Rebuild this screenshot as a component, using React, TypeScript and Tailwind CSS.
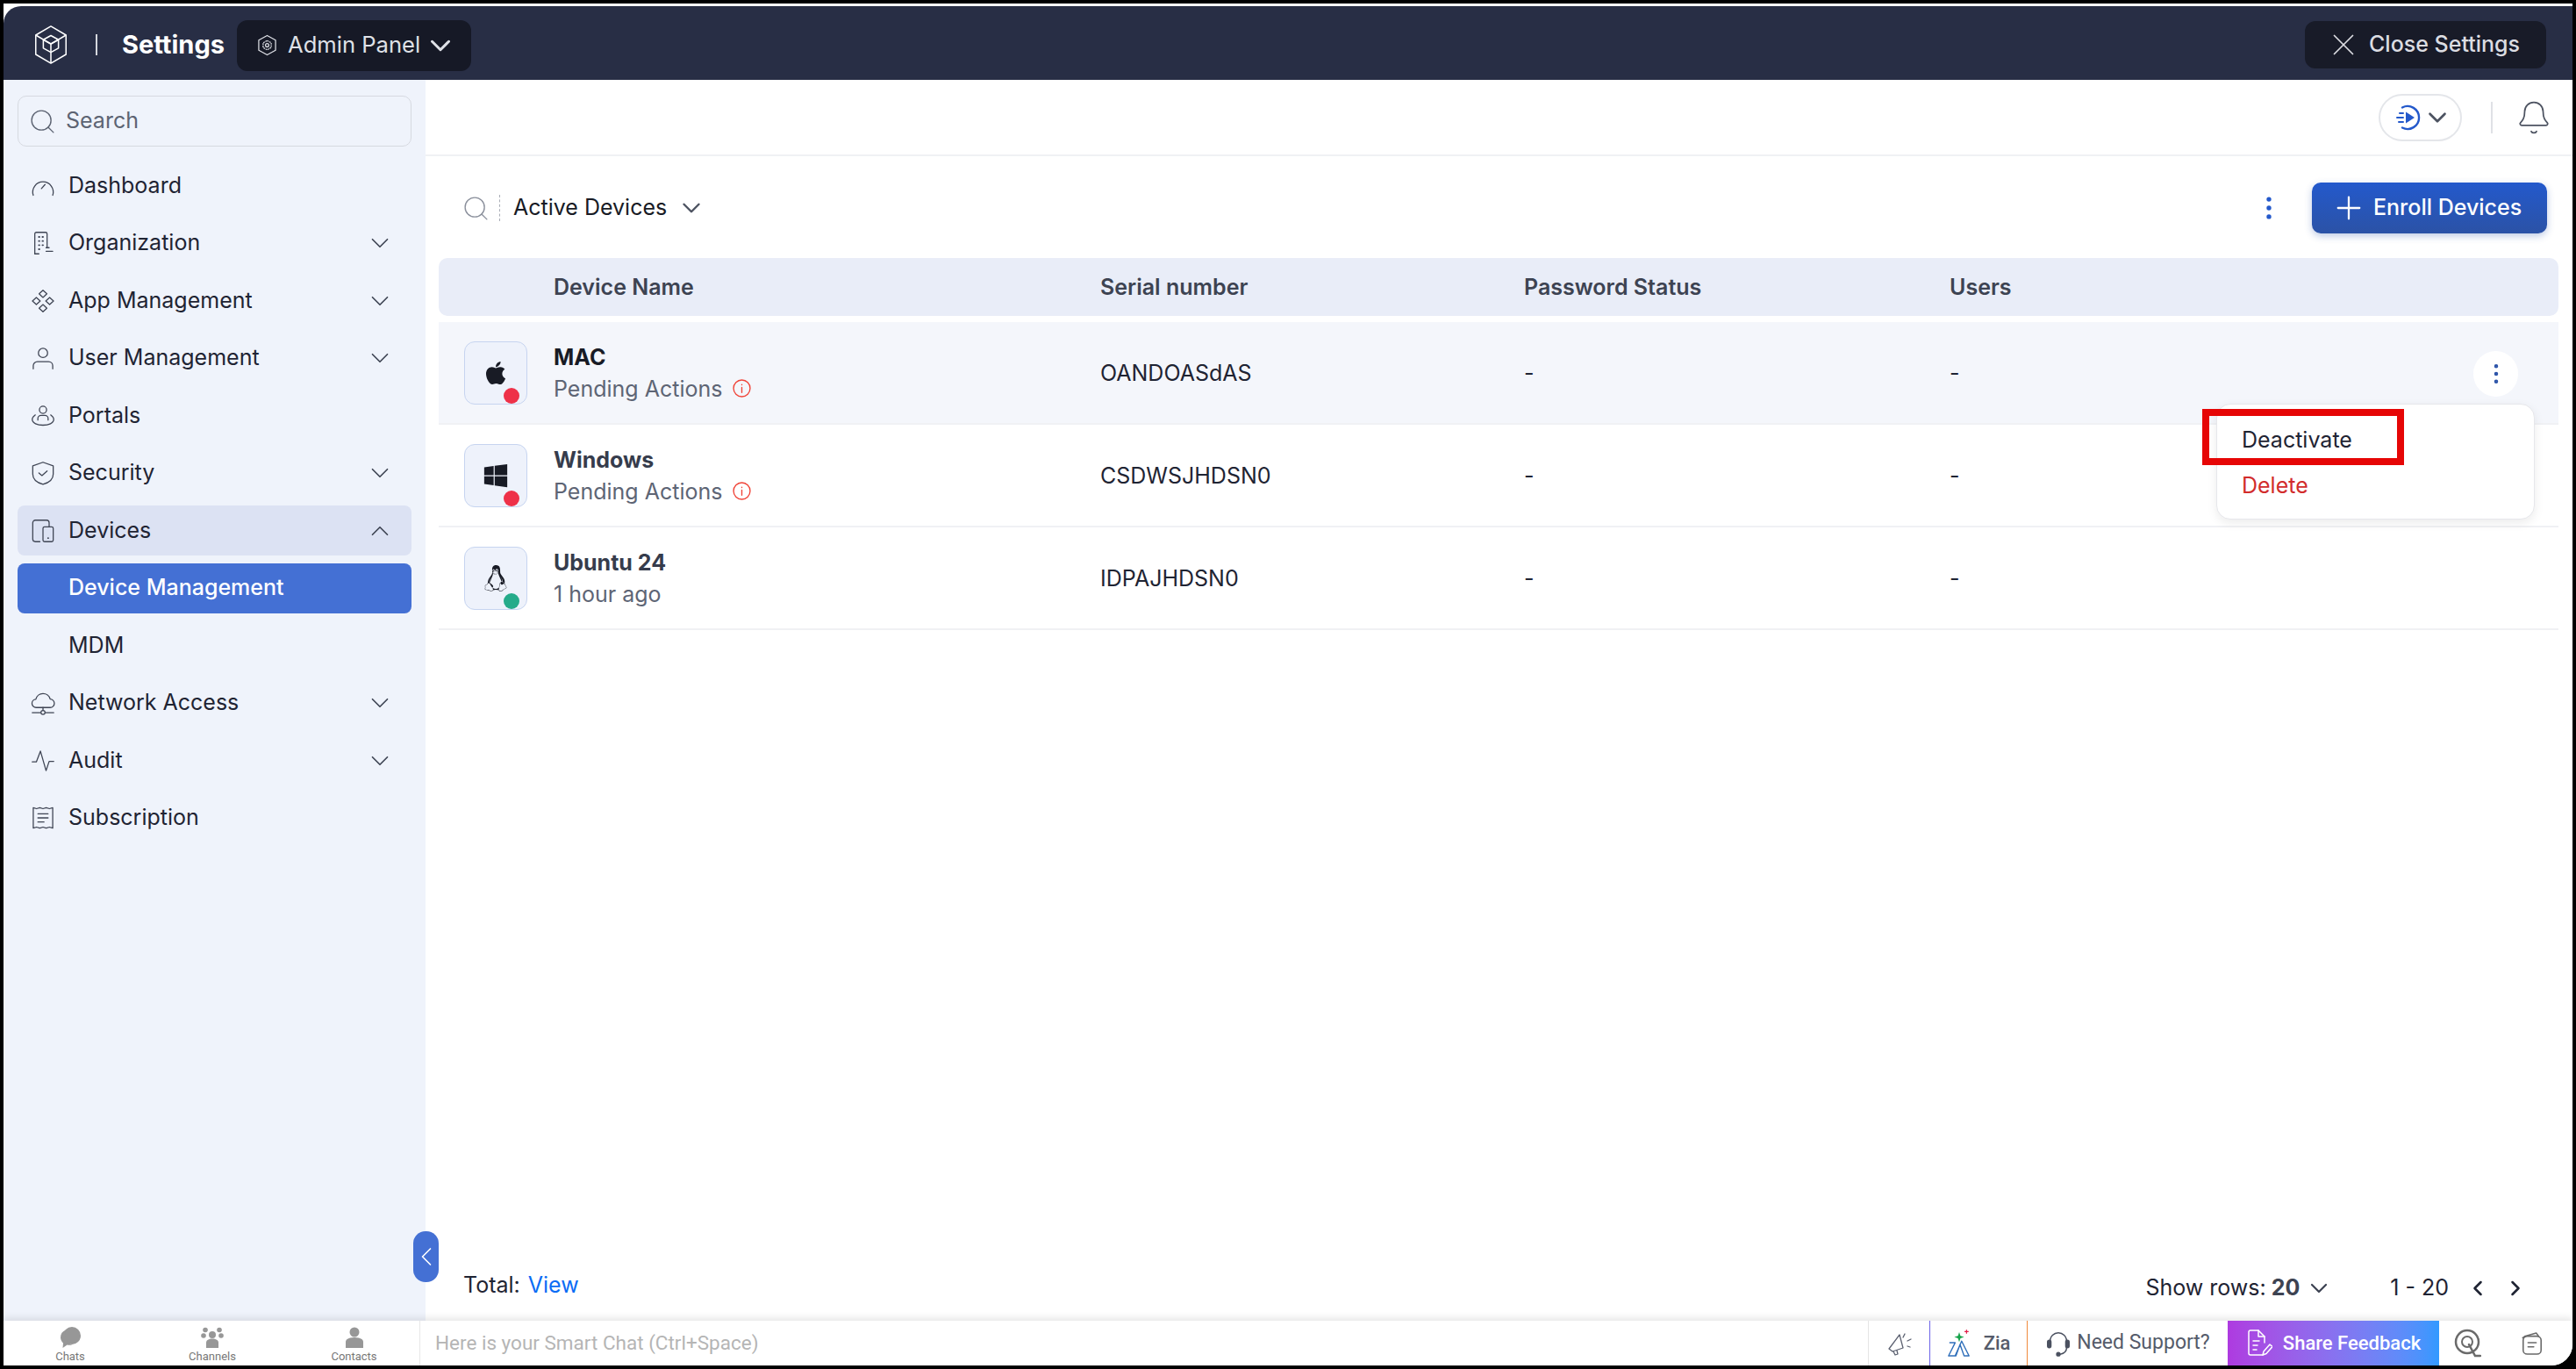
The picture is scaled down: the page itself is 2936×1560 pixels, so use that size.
import { useState } from "react";
import { ChevronDown, ChevronUp, ChevronLeft, ChevronRight, Plus, X, Search, Bell, EllipsisVertical } from "lucide-react";
import { FaApple, FaWindows, FaLinux } from "react-icons/fa";

type IconProps = { className?: string };

function Svg({ className, children }: IconProps & { children: React.ReactNode }) {
  return (
    <svg viewBox="0 0 24 24" fill="none" stroke="currentColor" strokeWidth="1.1" strokeLinecap="round" strokeLinejoin="round" className={className}>
      {children}
    </svg>
  );
}

const GaugeIcon = ({ className }: IconProps) => (
  <Svg className={className}>
    <path d="M2.500 21a10 10 0 1 1 19 0" />
    <path d="M10.500 14.500l3.500-4" />
  </Svg>
);
const BuildingIcon = ({ className }: IconProps) => (
  <Svg className={className}>
    <path d="M4 22.500V3A1.500 1.500 0 0 1 5.500 1.500h9A1.500 1.500 0 0 1 16 3v13" />
    <path d="M4 22.500h4M15 20h6.500M15 16.500h3" />
    <path d="M8 6h.5M11.500 6h.5M8 10h.5M11.500 10h.5M8 14h.5M11.500 14h.5M8 18h.5" strokeWidth="1.600" />
  </Svg>
);
const AppsIcon = ({ className }: IconProps) => (
  <Svg className={className}>
    <path d="M12 1.500l3.800 3.500L12 8.500 8.200 5zM12 15.500l3.800 3.500-3.800 3.500L8.200 19zM5.500 8.500L9.300 12l-3.800 3.500L1.700 12zM18.500 8.500l3.800 3.500-3.800 3.500-3.800-3.500z" />
  </Svg>
);
const UserIcon = ({ className }: IconProps) => (
  <Svg className={className}>
    <circle cx="12" cy="7" r="4.500" />
    <path d="M2.500 22.500v-3a4 4 0 0 1 4-4h11a4 4 0 0 1 4 4v3" />
  </Svg>
);
const PortalIcon = ({ className }: IconProps) => (
  <Svg className={className}>
    <circle cx="12" cy="6" r="3.500" />
    <path d="M7 16v-1.500a3 3 0 0 1 3-3h4a3 3 0 0 1 3 3V16" />
    <path d="M4.500 11C2.500 12.500 1.500 14 1.500 15.500c0 3.500 5 5.500 10.500 5.500s10.500-2 10.500-5.500c0-1.500-1-3-3-4.500" />
  </Svg>
);
const ShieldIcon = ({ className }: IconProps) => (
  <Svg className={className}>
    <path d="M12 1.500l10 3.500v8c0 5-4.500 8.500-10 10C6.500 21.500 2 18 2 13V5z" />
    <path d="M8 12l3 2.500 5-4.500" />
  </Svg>
);
const DevicesIcon = ({ className }: IconProps) => (
  <Svg className={className}>
    <path d="M9 22.500H4.500A2.500 2.500 0 0 1 2 20V4a2.500 2.500 0 0 1 2.500-2.500h11A2.500 2.500 0 0 1 18 4v3.500" />
    <rect x="12" y="8" width="10" height="14.500" rx="1.500" />
    <path d="M17 19h.1" strokeWidth="1.600" />
  </Svg>
);
const CloudIcon = ({ className }: IconProps) => (
  <Svg className={className}>
    <path d="M7 16.500H5.500a4 4 0 0 1-.5-8 7.200 7.200 0 0 1 14-.2 4 4 0 0 1 0 8.200z" />
    <path d="M1.500 21.500h8M14.500 21.500h8M12 16.500v2.500" />
    <circle cx="12" cy="21.300" r="2" />
  </Svg>
);
const PulseIcon = ({ className }: IconProps) => (
  <Svg className={className}>
    <path d="M1.500 13h4L9.500 2.500 15 21.500l3-9h4.500" />
  </Svg>
);
const ReceiptIcon = ({ className }: IconProps) => (
  <Svg className={className}>
    <path d="M2.500 2l3.200 1L8.900 2l3.100 1 3.100-1 3.200 1 3.200-1v20l-3.200-1-3.200 1-3.100-1-3.100 1-3.200-1-3.200 1z" />
    <path d="M7 8h10M7 12h10M7 16h6" />
  </Svg>
);

const CubeLogo = () => (
  <svg viewBox="0 0 40 48" fill="none" stroke="white" strokeWidth="1.600" strokeLinejoin="round" className="w-[40px] h-[46px]">
    <path d="M20 2l18 10.500v23L20 46 2 35.500v-23z" />
    <path d="M2 12.500L20 23l18-10.500M20 23v23" />
    <path d="M20 13l9 5v10l-9 5-9-5V18z" />
    <path d="M11 18l9 5 9-5" />
  </svg>
);
const HexGear = () => (
  <svg viewBox="0 0 24 26" fill="none" stroke="#dfe1e7" strokeWidth="1.300" strokeLinejoin="round" className="w-[23px] h-[25px]">
    <path d="M12 1.500l10 5.500v12l-10 5.500L2 19V7z" />
    <circle cx="12" cy="13" r="2" />
    <path d="M12 7.500l4.800 2.700v5.600L12 18.500l-4.800-2.700v-5.600z" strokeDasharray="2 0.800" />
  </svg>
);
const PlayFast = () => (
  <svg viewBox="0 0 30 30" fill="none" className="w-[30px] h-[30px]">
    <path d="M8 3.500A13 13 0 1 1 8 26.500" stroke="#2459cb" strokeWidth="2.400" strokeLinecap="round" />
    <path d="M12 8.500l10 6.500-10 6.500z" fill="#2459cb" />
    <path d="M5 10h4M2 15h7M4 20h5" stroke="#2459cb" strokeWidth="2" strokeLinecap="round" />
  </svg>
);
const InfoDot = () => (
  <svg viewBox="0 0 20 20" fill="none" stroke="#f04438" strokeWidth="1.300" className="w-[21px] h-[21px]">
    <circle cx="10" cy="10" r="9" />
    <path d="M10 9v5.500M10 5.800v.4" strokeLinecap="round" />
  </svg>
);
const ChatsIcon = () => (
  <svg viewBox="0 0 24 24" fill="#979797" className="w-[26px] h-[24px]">
    <circle cx="14" cy="10" r="10" />
    <path d="M7 3.500C3 5 1 8 1 12c0 3 1.500 5 3 6.500L3.500 24l5-3.500c2 .5 4 .5 6-.5-5-1-9-5-7.500-16.500z" />
  </svg>
);
const ChannelsIcon = () => (
  <svg viewBox="0 0 26 24" fill="#979797" className="w-[26px] h-[24px]">
    <circle cx="13" cy="9" r="4" />
    <circle cx="5" cy="3.500" r="2.800" />
    <circle cx="21" cy="3.500" r="2.800" />
    <circle cx="3" cy="10" r="2.800" />
    <circle cx="23" cy="10" r="2.800" />
    <path d="M6 24v-6c0-3 3-4.500 7-4.500s7 1.500 7 4.500v6z" />
  </svg>
);
const ContactIcon = () => (
  <svg viewBox="0 0 22 24" fill="#979797" className="w-[22px] h-[24px]">
    <circle cx="11" cy="6" r="5.500" />
    <path d="M1 24v-7c0-3 4-5 10-5s10 2 10 5v7z" />
  </svg>
);
const MegaphoneIcon = () => (
  <svg viewBox="0 0 30 30" fill="none" stroke="#5b6070" strokeWidth="1.300" strokeLinecap="round" strokeLinejoin="round" className="w-[30px] h-[30px]">
    <path d="M3 21L15 5l4 15-12 4z" />
    <path d="M8 24l2 4 3-1-1-4" />
    <path d="M21 4l-2 4M24 12l4-2M24 18l3 1" />
  </svg>
);
const ZiaLogo = () => (
  <svg viewBox="0 0 30 36" fill="none" className="w-[28px] h-[34px]">
    <path d="M3 17h7L2 33h9l5-14 5 14h6l-9-18-8 18" stroke="#2f6fba" strokeWidth="1.500" strokeLinejoin="round" />
    <path d="M15 4l1.500 4.500L21 10l-4.500 1.500L15 16l-1.500-4.500L9 10l4.500-1.500z" fill="#16a34a" />
    <path d="M24 1v5M21.500 3.500h5" stroke="#e11d48" strokeWidth="1.300" />
  </svg>
);
const HeadsetIcon = () => (
  <svg viewBox="0 0 30 34" fill="none" stroke="#4b5160" strokeWidth="1.600" strokeLinecap="round" className="w-[30px] h-[32px]">
    <path d="M5 14a10 10 0 0 1 20 0v8c0 4-3 7-8 8" />
    <rect x="2" y="13" width="4" height="9" rx="2" fill="#4b5160" />
    <rect x="24" y="13" width="4" height="9" rx="2" fill="#4b5160" />
    <circle cx="15" cy="30" r="2" fill="#4b5160" />
  </svg>
);
const FeedbackIcon = () => (
  <svg viewBox="0 0 30 34" fill="none" stroke="white" strokeWidth="1.500" strokeLinejoin="round" strokeLinecap="round" className="w-[30px] h-[34px]">
    <path d="M19 30H5a2 2 0 0 1-2-2V4a2 2 0 0 1 2-2h9l7 7v7" />
    <path d="M14 2v7h7M8 14h7M8 19h5M8 24h4" />
    <path d="M19 30l1-4 7-8 3 2.500-7 8z" />
  </svg>
);
const TargetQ = () => (
  <svg viewBox="0 0 32 34" fill="none" stroke="#6a6a6a" strokeWidth="2.500" strokeLinecap="round" className="w-[32px] h-[34px]">
    <circle cx="16" cy="15" r="13" />
    <circle cx="16" cy="15" r="6" strokeWidth="2" />
    <path d="M18 18l7 13h6" />
  </svg>
);
const NotesIcon = () => (
  <svg viewBox="0 0 28 30" fill="none" stroke="#6a6a6a" strokeWidth="1.700" strokeLinejoin="round" strokeLinecap="round" className="w-[26px] h-[28px]">
    <path d="M5 6l14-4 3 4" />
    <path d="M2.500 8l3-2" />
    <rect x="3" y="6" width="22" height="22" rx="5" />
    <path d="M9 14h10M9 19h7" />
  </svg>
);

const navItems = [
  { label: "Dashboard", icon: GaugeIcon },
  { label: "Organization", icon: BuildingIcon, chevron: true },
  { label: "App Management", icon: AppsIcon, chevron: true },
  { label: "User Management", icon: UserIcon, chevron: true },
  { label: "Portals", icon: PortalIcon },
  { label: "Security", icon: ShieldIcon, chevron: true },
  { label: "Devices", icon: DevicesIcon, open: true },
  { label: "Device Management", active: true },
  { label: "MDM" },
  { label: "Network Access", icon: CloudIcon, chevron: true },
  { label: "Audit", icon: PulseIcon, chevron: true },
  { label: "Subscription", icon: ReceiptIcon },
];

const devices = [
  { name: "MAC", status: "Pending Actions", serial: "OANDOASdAS", os: "apple", online: false, hover: true },
  { name: "Windows", status: "Pending Actions", serial: "CSDWSJHDSN0", os: "windows", online: false },
  { name: "Ubuntu 24", status: "1 hour ago", serial: "IDPAJHDSN0", os: "linux", online: true },
];

const columns = "grid grid-cols-[131px_623px_483px_485px_1fr] items-center";

function OsIcon({ os }: { os: string }) {
  if (os === "apple") return <FaApple className="w-[30px] h-[30px] text-[#181b25]" />;
  if (os === "windows") return <FaWindows className="w-[30px] h-[30px] text-[#181b25]" />;
  return <FaLinux className="w-[30px] h-[30px] text-[#181b25]" />;
}

function Sidebar() {
  return (
    <aside className="w-[481px] shrink-0 bg-[#eff3fb] pl-[16px] pr-[16px] pt-[18px]">
      <div className="h-[58px] flex items-center gap-[10px] pl-[11px] rounded-[10px] border border-[#d6d9e0] text-[#5d6473]">
        <Search className="w-[33px] h-[33px]" strokeWidth={1} />
        <span className="text-[25px]">Search</span>
      </div>
      <nav className="mt-[16px] flex flex-col gap-[8.5px]">
        {navItems.map((item) => {
          const Icon = item.icon;
          return (
            <div
              key={item.label}
              className={
                "h-[57px] flex items-center rounded-[8px] text-[25px] " +
                (item.active ? "bg-[#4470d4] text-white font-medium" : item.open ? "bg-[#dce2f3] text-[#1f2433]" : "text-[#1f2433]")
              }
            >
              <span className="w-[58px] shrink-0 flex justify-center text-[#3f4554]">
                {Icon && <Icon className="w-[28px] h-[28px]" />}
              </span>
              <span className="flex-1">{item.label}</span>
              {item.chevron && <ChevronDown className="w-[34px] h-[34px] mr-[19px] text-[#3f4554]" strokeWidth={1.2} />}
              {item.open && <ChevronUp className="w-[34px] h-[34px] mr-[19px] text-[#3f4554]" strokeWidth={1.2} />}
            </div>
          );
        })}
      </nav>
    </aside>
  );
}

function DeviceRow({ device }: { device: (typeof devices)[number] }) {
  return (
    <div className={columns + " h-[117px] border-b-2 border-[#f0f1f4] " + (device.hover ? "bg-[#f4f6fb]" : "bg-white")}>
      <div className="pl-[29px]">
        <div className="relative w-[72px] h-[72px] rounded-[12px] border border-[#c6d4f0] bg-[#eef2fb] flex items-center justify-center">
          <OsIcon os={device.os} />
          <span className={"absolute right-[8px] bottom-[0px] w-[18px] h-[18px] rounded-full " + (device.online ? "bg-[#25ab8a]" : "bg-[#ee3148]")} />
        </div>
      </div>
      <div>
        <div className={"text-[25px] font-bold leading-[36px] " + (device.hover ? "text-[#181b25]" : "text-[#363c4c]")}>{device.name}</div>
        <div className="text-[25px] leading-[36px] text-[#5e6575] flex items-center gap-[12px]">
          {device.status}
          {!device.online && <InfoDot />}
        </div>
      </div>
      <div className="pt-[3px] text-[25px] text-[#1f2433]">{device.serial}</div>
      <div className="pt-[3px] text-[25px] text-[#1f2433]">-</div>
      <div className="pt-[3px] text-[25px] text-[#1f2433]">-</div>
    </div>
  );
}

export default function App() {
  const [rows] = useState(devices);

  return (
    <div className="w-[2936px] h-[1560px] bg-black p-[4px] font-['Inter',sans-serif]">
      <div className="relative w-full h-full bg-white pt-[3px] flex flex-col overflow-hidden rounded-br-[24px]">
        <header className="h-[84px] shrink-0 bg-[#282e45] rounded-tl-[20px] flex items-center pt-[3px] pl-[34px] pr-[30px]">
          <CubeLogo />
          <div className="w-[2px] h-[24px] bg-[#d5d7dd] ml-[31px]" />
          <span className="ml-[28px] text-[29px] font-bold text-white">Settings</span>
          <button className="ml-[14px] mt-[2px] h-[58px] w-[267px] rounded-[12px] bg-[#161926] flex items-center pl-[23px] text-[#dfe1e7] text-[25.6px]">
            <HexGear />
            <span className="ml-[12px]">Admin Panel</span>
            <ChevronDown className="w-[38px] h-[38px] ml-[4px]" strokeWidth={1.9} />
          </button>
          <button className="ml-auto h-[54px] w-[275px] rounded-[12px] bg-[#181b28] flex items-center pl-[23px] text-[#dcdde2] text-[25px] font-medium">
            <X className="w-[42px] h-[42px]" strokeWidth={1} />
            <span className="ml-[8px]">Close Settings</span>
          </button>
        </header>

        <div className="flex-1 flex min-h-0">
          <Sidebar />
          <main className="flex-1 flex flex-col min-w-0">
            <div className="h-[87px] shrink-0 border-b-2 border-[#f0f1f4] flex items-center justify-end pr-[23px]">
              <div className="h-[54px] w-[95px] rounded-full border-2 border-[#e4e6ea] flex items-center pl-[17px]">
                <PlayFast />
                <ChevronDown className="w-[34px] h-[34px] ml-[1px] text-[#4d5361]" strokeWidth={1.9} />
              </div>
              <div className="w-[2px] h-[36px] bg-[#dfe1e6] ml-[33px] mr-[26px]" />
              <Bell className="w-[42px] h-[42px] text-[#4d5361]" strokeWidth={1} />
            </div>

            <div className="h-[116px] shrink-0 flex items-center pt-[2px] pl-[41px] pr-[29px]">
              <Search className="w-[33px] h-[33px] text-[#8b909c]" strokeWidth={1} />
              <div className="w-0 h-[30px] ml-[10px] border-l border-dashed border-[#a9adb6]" />
              <span className="ml-[15px] text-[25px] text-[#181b25]">Active Devices</span>
              <ChevronDown className="w-[34px] h-[34px] ml-[11px] text-[#4d5361]" strokeWidth={1.7} />
              <EllipsisVertical className="w-[34px] h-[34px] ml-auto mr-[32px] text-[#2459cb]" strokeWidth={1.8} />
              <button className="h-[58px] w-[268px] rounded-[10px] bg-gradient-to-b from-[#2359cc] to-[#2b52a6] shadow-[0_3px_8px_rgba(36,80,170,0.3)] flex items-center pl-[21px] gap-[7px] text-white text-[25px] font-medium">
                <Plus className="w-[42px] h-[42px]" strokeWidth={1.3} />
                Enroll Devices
              </button>
            </div>

            <div className="ml-[15px] mr-[16px]">
              <div className={columns + " h-[66px] pt-[1px] rounded-[10px] bg-[#e9edf8] text-[25px] font-semibold text-[#3d4352]"}>
                <span />
                <span>Device Name</span>
                <span>Serial number</span>
                <span>Password Status</span>
                <span>Users</span>
              </div>
              <div className="mt-[7px]">
                {rows.map((device) => (
                  <DeviceRow key={device.name} device={device} />
                ))}
              </div>
            </div>

            <div className="mt-auto h-[78px] shrink-0 flex items-center pl-[43px] pr-[51px] text-[25px] text-[#1f2433]">
              <span className="pb-[3px]">
                Total: <span className="ml-[2px] text-[#0a6cf5]">View</span>
              </span>
              <span className="ml-auto pt-[4px] flex items-center">
                Show rows: <b className="ml-[6px] font-bold text-[#3d4352]">20</b>
                <ChevronDown className="w-[32px] h-[32px] ml-[6px] text-[#3d4352]" strokeWidth={1.7} />
              </span>
              <span className="ml-[65px] pt-[4px]">1 - 20</span>
              <ChevronLeft className="w-[28px] h-[28px] ml-[19px] mt-[4px]" strokeWidth={2.2} />
              <ChevronRight className="w-[28px] h-[28px] ml-[15px] mt-[4px]" strokeWidth={2.2} />
            </div>
          </main>
        </div>

        <footer className="relative h-[51px] shrink-0 bg-white flex shadow-[0_-3px_8px_rgba(0,0,0,0.1)] font-['Roboto',sans-serif]">
          <div className="w-[475px] shrink-0 grid grid-cols-[152px_172px_151px] border-r border-[#e8e8e8] text-[13px] text-[#777]">
            <div className="flex flex-col items-center justify-end"><ChatsIcon /><span className="leading-[20px]">Chats</span></div>
            <div className="flex flex-col items-center justify-end"><ChannelsIcon /><span className="leading-[20px]">Channels</span></div>
            <div className="flex flex-col items-center justify-end"><ContactIcon /><span className="leading-[20px]">Contacts</span></div>
          </div>
          <div className="flex-1 flex items-center pl-[17px] text-[22.5px] text-[#b5b5b5]">Here is your Smart Chat (Ctrl+Space)</div>
          <div className="w-[70px] flex items-center justify-center border-l border-[#e5e5e5]"><MegaphoneIcon /></div>
          <div className="w-[111px] flex items-center justify-center gap-[14px] border-l border-[#6c63e8] text-[22px] font-medium text-[#555b6a]"><ZiaLogo />Zia</div>
          <div className="w-[229px] flex items-center justify-center gap-[6px] border-l border-[#f08a3c] text-[23px] text-[#555b6a]"><HeadsetIcon />Need Support?</div>
          <div className="w-[241px] flex items-center justify-center gap-[12px] bg-gradient-to-r from-[#ae3ae0] to-[#3199ff] text-[22px] text-white font-medium"><FeedbackIcon />Share Feedback</div>
          <div className="w-[152px] flex items-center justify-between pl-[16px] pr-[33px]"><TargetQ /><NotesIcon /></div>
        </footer>

        {/* collapse handle */}
        <button className="absolute left-[467px] top-[1399px] w-[29px] h-[58px] rounded-[14px] bg-[#4470d4] flex items-center justify-center text-white">
          <ChevronLeft className="w-[36px] h-[36px] shrink-0" strokeWidth={1.1} />
        </button>

        {/* row actions */}
        <div className="absolute left-[2815px] top-[396px] w-[51px] h-[52px] rounded-full bg-white flex items-center justify-center text-[#2a52a8]">
          <EllipsisVertical className="w-[30px] h-[30px]" strokeWidth={1.6} />
        </div>
        <div className="absolute left-[2522px] top-[456px] w-[363px] h-[132px] rounded-[16px] border border-[#e6e7eb] bg-white shadow-[0_4px_12px_rgba(0,0,0,0.08)] pt-[17px] pl-[28px] text-[25px]">
          <div className="h-[48px] flex items-center text-[#1f2433]">Deactivate</div>
          <div className="h-[56px] flex items-center text-[#d22c2c]">Delete</div>
        </div>
        <div className="absolute left-[2506px] top-[462px] w-[230px] h-[64px] border-[8px] border-[#e60606]" />
      </div>
    </div>
  );
}
